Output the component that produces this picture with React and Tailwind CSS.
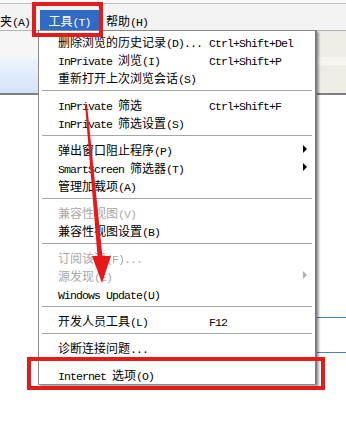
import React from 'react';

// IE "工具" menu, XP look
const menuItems = [
  { t: '删除浏览的历史记录(D)...', k: 'Ctrl+Shift+Del' },
  { t: 'InPrivate 浏览(I)', k: 'Ctrl+Shift+P' },
  { t: '重新打开上次浏览会话(S)' },
  'sep',
  { t: 'InPrivate 筛选', k: 'Ctrl+Shift+F' },
  { t: 'InPrivate 筛选设置(S)' },
  'sep',
  { t: '弹出窗口阻止程序(P)', sub: true },
  { t: 'SmartScreen 筛选器(T)', sub: true },
  { t: '管理加载项(A)' },
  'sep',
  { t: '兼容性视图(V)', off: true },
  { t: '兼容性视图设置(B)' },
  'sep',
  { t: '订阅该源(F)...', off: true },
  { t: '源发现(E)', off: true, sub: true },
  { t: 'Windows Update(U)' },
  'sep',
  { t: '开发人员工具(L)', k: 'F12' },
  'sep',
  { t: '诊断连接问题...' },
  'sep',
  { t: 'Internet 选项(O)' },
];

// split text into ascii / cjk runs so each gets its own font
const Txt = ({ s }) => {
  const parts = s.split(/([\x00-\x7f]+)/).filter(Boolean);
  return (
    <span className="whitespace-pre">
      {parts.map((p, i) =>
        /^[\x00-\x7f]+$/.test(p) ? (
          <span key={i} className="font-['Liberation_Mono',monospace] text-[11.5px] tracking-[-0.9px]">
            {p}
          </span>
        ) : (
          <span key={i} className="font-['Noto_Sans_CJK_SC',sans-serif] text-[12px]">
            {p}
          </span>
        )
      )}
    </span>
  );
};

const MenuRow = ({ item }) => (
  <div className={`h-[18px] flex items-center pl-[19px] ${item.off ? 'text-[#a8a8a8]' : 'text-black'}`}>
    <div className="w-[151px] shrink-0 whitespace-nowrap leading-none">
      <Txt s={item.t} />
    </div>
    {item.k && (
      <div className="whitespace-nowrap leading-none">
        <Txt s={item.k} />
      </div>
    )}
    {item.sub && (
      <div
        className={`ml-auto mr-[8px] w-0 h-0 border-y-[4px] border-l-[4px] border-y-transparent ${
          item.off ? 'border-l-[#b0b0b0]' : 'border-l-black'
        }`}
      ></div>
    )}
  </div>
);

const App = () => {
  return (
    <div className="relative w-[346px] h-[440px] bg-white overflow-hidden leading-none">
      {/* window top */}
      <div className="h-[3px] bg-[#f9f9f9]"></div>
      <div className="h-px bg-[#c4c4c4]"></div>

      {/* menu bar */}
      <div className="h-[26px] bg-[#f3f3f3] flex items-end">
        <div className="h-[20px] flex items-center">
          <Txt s="夹(A)" />
        </div>
        <div className="h-[20px] w-[59px] ml-[10px] bg-[#316ac5] text-white flex items-center justify-center">
          <Txt s="工具(T)" />
        </div>
        <div className="h-[20px] ml-[7px] flex items-center">
          <Txt s="帮助(H)" />
        </div>
      </div>
      <div className="h-px bg-[#b4b4b4]"></div>

      {/* toolbar strip behind the menu */}
      <div className="flex h-[62px]">
        <div className="w-[200px] flex flex-col">
          <div className="h-[28px] bg-[#f6f6f6]"></div>
          <div className="flex-1 bg-gradient-to-b from-[#eef4fc] to-[#d2e2f6]"></div>
        </div>
        <div className="flex-1 flex flex-col bg-[#eeede6]">
          <div className="h-[26px]"></div>
          <div className="h-[8px] bg-[#f6f5f0]"></div>
        </div>
      </div>
      <div className="h-[2px] bg-[#7f7f7f]"></div>

      {/* page content: thin blue rules on the right */}
      <div className="flex flex-col items-end">
        <div className="mt-[222px] h-px w-[30px] bg-[#4a7fd0]"></div>
        <div className="mt-[34px] h-px w-[30px] bg-[#4a7fd0]"></div>
      </div>

      {/* dropdown menu */}
      <div className="absolute left-[38px] top-[30px] w-[279px] bg-white border border-[#8a8a8a] border-r-[2px] border-r-[#7a7a7a] shadow-[2px_2px_2px_rgba(0,0,0,0.35)] py-[1px]">
        {menuItems.map((item, i) =>
          item === 'sep' ? (
            <div key={i} className="h-[9px] flex items-center px-[3px]">
              <div className="h-px w-full bg-[#a6a6a6]"></div>
            </div>
          ) : (
            <MenuRow key={i} item={item} />
          )
        )}
      </div>

      {/* red annotations */}
      <div className="absolute left-[32px] top-[2px] w-[71px] h-[35px] border-[4px] border-[#e41b1b]"></div>
      <div className="absolute left-[27px] top-[357px] w-[298px] h-[33px] border-[4px] border-[#e41b1b]"></div>
      <svg className="absolute left-0 top-0 pointer-events-none" width="346" height="440" viewBox="0 0 346 440">
        <polygon points="85,104 87,104 103,262 98,262" fill="#e8181a" />
        <polygon points="92,256 111,256 102,283" fill="#e8181a" />
      </svg>
    </div>
  );
};

export default App;
